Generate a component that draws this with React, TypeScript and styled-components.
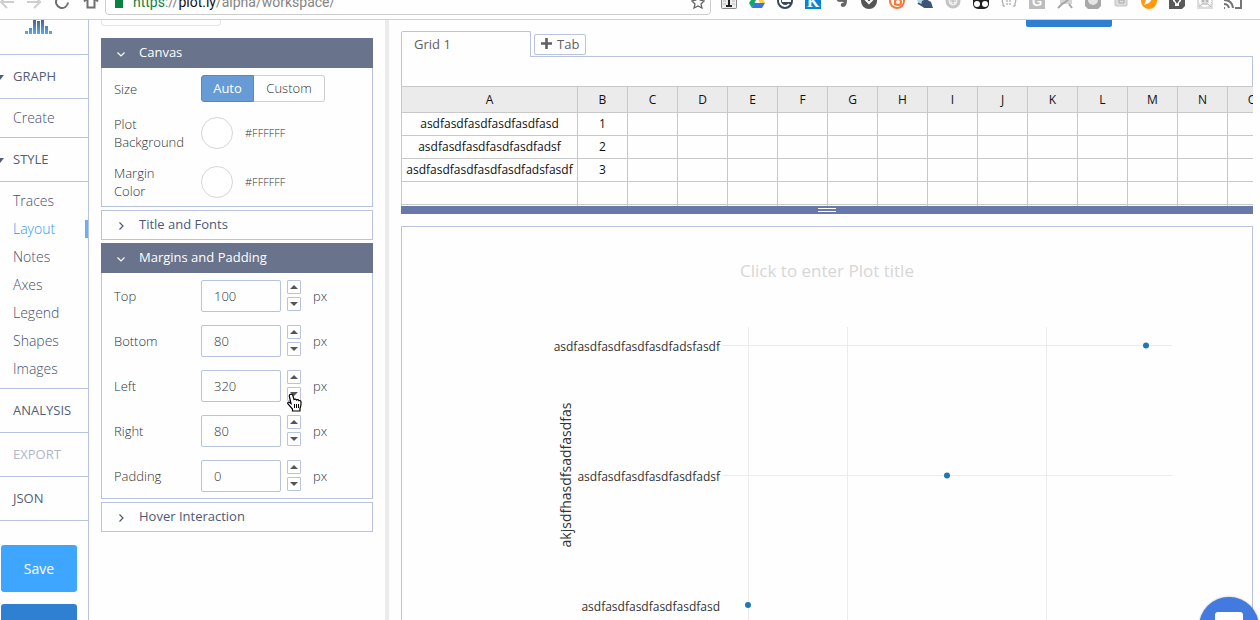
import React, { useState } from "react";
import styled, { createGlobalStyle } from "styled-components";

const line = "#b9c3de";
const slate = "#69738c";

const GlobalStyle = createGlobalStyle`
  * { box-sizing: border-box; }
  html, body { margin: 0; background: #fefefe; }
  body, button, input, table { font-family: "Open Sans", "Noto Sans", sans-serif; }
  button, input { margin: 0; padding: 0; }
`;

const Page = styled.div`
  display: flex;
  flex-direction: column;
  height: 100vh;
  overflow: hidden;
  background: #fefefe;
`;

/* Browser bar */
const BrowserBar = styled.header`
  display: flex;
  align-items: flex-end;
  flex: none;
  height: 20px;
  border-bottom: 1px solid #cfcfcf;
`;
const NavIcons = styled.div`
  display: flex;
  flex: none;
  width: 105px;
  padding-bottom: 10px;
`;
const Address = styled.div`
  display: flex;
  align-items: center;
  flex: 1;
  height: 30px;
  margin-bottom: 4px;
  padding: 4px 5px 0 9px;
  border: 1px solid #cdcdcd;
  border-radius: 4px;
`;
const Lock = styled.span`
  width: 8px;
  height: 12px;
  margin-right: 10px;
  background: #0c8043;
`;
const Url = styled.span`
  flex: 1;
  font: 14px/20px Roboto, "Liberation Sans", sans-serif;
  color: #858585;
`;
const UrlPart = styled.span<{ $color: string }>`
  color: ${(p) => p.$color};
`;
const Extensions = styled.div`
  display: flex;
  flex: none;
  width: 549px;
  padding: 0 0 10px 4px;
`;
const ExtSlot = styled.svg`
  flex: none;
  width: 28px;
  height: 16px;
  overflow: visible;
  font-family: "Liberation Sans", sans-serif;
  font-weight: bold;
`;

/* Workspace */
const Workspace = styled.div`
  display: flex;
  flex: 1;
  min-height: 0;
  overflow: hidden;
`;
const Sidebar = styled.nav`
  flex: none;
  width: 89px;
  border-right: 1px solid ${line};
  overflow: hidden;
`;
const Logo = styled.div`
  height: 35px;
  padding-left: 25px;
  border-bottom: 1px solid ${line};
  svg { display: block; }
`;
const Section = styled.button<{ $muted?: boolean; $open?: boolean }>`
  position: relative;
  display: block;
  width: 100%;
  height: 44px;
  padding: 0 0 2px 13px;
  border: 0;
  border-bottom: 1px solid ${line};
  background: none;
  text-align: left;
  font-size: 13px;
  line-height: 20px;
  color: ${(p) => (p.$muted ? "#b0b7c9" : "#535d78")};
  &::before {
    content: "";
    display: ${(p) => (p.$open ? "block" : "none")};
    position: absolute;
    left: -4px;
    top: 20px;
    border: 4px solid transparent;
    border-top: 5px solid #535d78;
    border-bottom: 0;
  }
`;
const NavGroup = styled.div<{ $pad: number }>`
  padding: ${(p) => p.$pad}px 0;
  border-bottom: 1px solid ${line};
`;
const NavLink = styled.a<{ $active?: boolean }>`
  display: block;
  padding-left: 13px;
  font-size: 14px;
  font-weight: 300;
  line-height: 28px;
  text-decoration: none;
  color: ${(p) => (p.$active ? "#3399f5" : "#465070")};
  background: ${(p) =>
    p.$active ? "linear-gradient(#6aaffa, #6aaffa) right center / 3px 18px no-repeat" : "none"};
`;
const SideActions = styled.div`
  display: flex;
  flex-direction: column;
  gap: 12px;
  padding: 24px 11px 0 1px;
`;
const SideButton = styled.button<{ $dark?: boolean }>`
  height: 47px;
  border: 0;
  border-radius: 3px;
  font-size: 14px;
  color: #fff;
  background: ${(p) => (p.$dark ? "#2f80d3" : "#3fa6ff")};
`;

const Controls = styled.aside`
  display: flex;
  flex-direction: column;
  gap: 3px;
  flex: none;
  width: 300px;
  padding: 0 12px;
  border-right: 4px solid #ebebeb;
`;
const ScrolledBox = styled.div`
  width: 120px;
  height: 6px;
  margin-bottom: 9px;
  border: 1px solid #e4e4e4;
  border-top: 0;
  border-radius: 0 0 4px 4px;
`;
const Fold = styled.section`
  flex: none;
`;
const FoldHead = styled.button<{ $open?: boolean }>`
  display: flex;
  align-items: center;
  width: 100%;
  height: 30px;
  padding: 0 0 2px 14px;
  border: 1px solid ${(p) => (p.$open ? slate : line)};
  background: ${(p) => (p.$open ? slate : "#fefefe")};
  color: ${(p) => (p.$open ? "#fff" : "#4f5975")};
  font-size: 13px;
  line-height: 18px;
  font-weight: 500;
  svg { margin: 3px 13px 0 0; }
`;
const FoldBody = styled.div`
  display: flex;
  flex-direction: column;
  gap: 13px;
  padding: 7px 12px 6px;
  border: 1px solid ${line};
  border-top: 0;
`;
const Row = styled.div`
  display: flex;
  align-items: center;
`;
const labelText = `
  flex: none;
  width: 87px;
  padding-right: 12px;
  font-size: 13px;
  font-weight: 300;
  line-height: 18px;
  color: #333;
`;
const Label = styled.label`${labelText}`;
const Caption = styled.span`${labelText}`;
const Toggle = styled.button<{ $on?: boolean }>`
  width: ${(p) => (p.$on ? 53 : 71)}px;
  height: 27px;
  padding-bottom: 1px;
  border: 1px solid ${(p) => (p.$on ? "#5f86b8" : "#cfcfcf")};
  border-left-width: ${(p) => (p.$on ? 1 : 0)}px;
  border-radius: ${(p) => (p.$on ? "3px 0 0 3px" : "0 3px 3px 0")};
  background: ${(p) => (p.$on ? "#669bd6" : "#fefefe")};
  color: ${(p) => (p.$on ? "#fff" : "#333")};
  font-size: 13px;
  font-weight: ${(p) => (p.$on ? 400 : 300)};
`;
const Swatch = styled.button`
  width: 32px;
  height: 32px;
  margin-right: 12px;
  border: 1px solid #d6d6d6;
  border-radius: 50%;
  background: #fff;
`;
const Hex = styled.span`
  font-size: 11px;
  font-weight: 300;
  line-height: 18px;
  color: #333;
`;
const NumberBox = styled.input`
  width: 80px;
  height: 32px;
  padding: 0 12px;
  border: 1px solid ${line};
  border-radius: 2px;
  background: #fefefe;
  font-size: 13px;
  font-weight: 300;
  color: #333;
  outline: 0;
`;
const Spinner = styled.div`
  position: relative;
  display: flex;
  flex-direction: column;
  gap: 3px;
  margin: 0 12px 1px 6px;
`;
const Step = styled.button`
  display: flex;
  align-items: center;
  justify-content: center;
  width: 14px;
  height: 14px;
  border: 1px solid ${line};
  border-radius: 1px;
  background: #fefefe;
`;
const Hand = styled.svg`
  position: absolute;
  left: 0;
  top: 23px;
  z-index: 2;
`;
const Unit = styled.span`
  font-size: 13px;
  font-weight: 300;
  line-height: 18px;
  color: #333;
`;

const Main = styled.main`
  display: flex;
  flex-direction: column;
  flex: 1;
  min-width: 0;
  padding: 0 7px 0 12px;
`;
const TopActions = styled.div`
  display: flex;
  align-items: flex-end;
  justify-content: flex-end;
  flex: none;
  height: 11px;
  padding: 0 141px 4px 0;
`;
const TopButton = styled.button`
  flex: none;
  width: 86px;
  height: 32px;
  border: 0;
  border-radius: 2px;
  background: #2f80d3;
`;
const Tabs = styled.div`
  display: flex;
  flex: none;
  height: 26px;
`;
const Tab = styled.button`
  width: 130px;
  padding: 0 0 2px 12px;
  border: 1px solid ${line};
  border-bottom: 0;
  border-radius: 2px 2px 0 0;
  background: #fefefe;
  text-align: left;
  font-size: 13px;
  color: #5f5f5f;
`;
const TabRest = styled.div`
  flex: 1;
  padding: 3px 0 0 3px;
  border-bottom: 1px solid ${line};
`;
const AddTab = styled.button`
  display: flex;
  align-items: center;
  gap: 5px;
  width: 52px;
  height: 21px;
  padding: 0 0 2px 6px;
  border: 1px solid ${line};
  border-radius: 2px;
  background: #fefefe;
  font-size: 13px;
  color: #5f5f5f;
`;
const SheetBar = styled.div`
  flex: none;
  height: 29px;
  border: solid ${line};
  border-width: 0 1px;
`;
const Sheet = styled.div`
  flex: none;
  height: 120px;
  overflow: hidden;
`;
const Grid = styled.table`
  width: 1427px;
  table-layout: fixed;
  border-spacing: 0;
  border: solid #c8c8c8;
  border-width: 1px 0 0 1px;
  font-size: 12px;
  line-height: 18px;
  color: #111;
  th, td {
    height: 23px;
    padding: 0;
    border: solid #c8c8c8;
    border-width: 0 1px 1px 0;
    text-align: center;
    font-weight: 400;
  }
  th { width: 50px; height: 26px; background: #ebebeb; }
  th:first-child { width: 176px; }
`;
const Splitter = styled.div`
  display: flex;
  flex-direction: column;
  align-items: center;
  gap: 2px;
  flex: none;
  height: 8px;
  padding-top: 2px;
  background: #6878a8;
`;
const Grip = styled.span`
  width: 18px;
  height: 1px;
  background: #fff;
`;
const Plot = styled.div`
  display: flex;
  justify-content: center;
  flex: 1;
  min-height: 0;
  margin-top: 12px;
  border: 1px solid ${line};
  border-bottom: 0;
  overflow: hidden;
  svg { flex: none; font-family: "Open Sans", "Noto Sans", sans-serif; }
`;
const ChatButton = styled.button`
  position: fixed;
  right: 1px;
  bottom: -37px;
  width: 60px;
  height: 60px;
  border: 0;
  border-radius: 50%;
  background: #427ae0;
  box-shadow: 0 0 2px rgba(0, 0, 0, 0.4);
  svg { display: block; margin: 0 auto; }
`;

const extensions: React.ReactNode[] = [
  <><rect x="6.500" y=".500" width="15" height="15" rx="1" fill="#eee" stroke="#888" /><path d="M14 1v12M11 13h6" stroke="#222" strokeWidth="2" /><path d="M8 8h3M8 11h3M17 8h3M17 11h3" stroke="#bbb" /></>,
  <><path d="M12 1h5l5 9h-5z" fill="#ffcf48" /><path d="M12 1l2 4-5 10-3-5z" fill="#11a861" /><path d="M11 10h11l-3 5H9z" fill="#3777e3" /></>,
  <><circle cx="14" cy="8" r="8" fill="#36465d" /><path d="M18 11a5 5 0 1 1 1-3H11" fill="none" stroke="#fff" strokeWidth="2" /></>,
  <><path d="M6 0h16v16H6z" fill="#0a84d0" /><text x="8" y="14" fontSize="16" fill="#fff" fontFamily="Liberation Serif">K</text></>,
  <path d="M9 4l4-4h4q3 0 3 7 0 7-4 7-3 0-2-3 1-2 3-1-1-2-4-1-4 0-4-5z" fill="#666" />,
  <><path d="M6 1h16v7a8 8 0 0 1-16 0z" fill="#555" /><path d="M10 6l4 4 4-4" fill="none" stroke="#fff" strokeWidth="2" /></>,
  <><circle cx="14" cy="8" r="7" fill="#fff" stroke="#f47b3d" strokeWidth="2" /><path d="M12 1v11" stroke="#f47b3d" strokeWidth="2" /><circle cx="15" cy="9" r="3" fill="none" stroke="#f47b3d" strokeWidth="2" /></>,
  <><circle cx="10" cy="6" r="4" fill="#b7d6ee" /><path d="M11 8l4-2 5 3 2 6h-9l-3-3z" fill="#3e5575" /><path d="M7 10l5 3" stroke="#3e5575" strokeWidth="2" /></>,
  <><circle cx="14" cy="8" r="6" fill="#eee" stroke="#c4c4c4" strokeWidth="3" /><path d="M14 5v6M11 8h6" stroke="#bbb" /></>,
  <><rect x="6" y="0" width="16" height="16" rx="5" fill="#222" /><circle cx="10" cy="11" r="3" fill="#fff" /><circle cx="18" cy="11" r="3" fill="#fff" /></>,
  <><path d="M10 1H8v5L7 8l1 2v3h2M18 1h2v5l1 2-1 2v3h-2" fill="none" stroke="#999" /><path d="M11 8h6M11 11h6" stroke="#999" strokeDasharray="2 1" /></>,
  <><path d="M6 0h16v16H6z" fill="#bdbdbd" /><text x="9" y="13" fontSize="13" fill="#fff">G</text></>,
  <><path d="M9 2h12v9H9z" fill="#d5d5d5" /><path d="M7 15l4-4 2-1 4-3M18 11l3 4" fill="none" stroke="#a6a6a6" strokeWidth="2" /></>,
  <><path d="M6 0h16v13l-3 3H9l-3-3z" fill="#a8a8a8" /><circle cx="14" cy="7" r="5" fill="#e5e5e5" /></>,
  <><rect x="8" y="0" width="12" height="13" rx="1" fill="#ddd" stroke="#c2c2c2" /><path d="M12 4h5v6h-5zM12 7h5" fill="none" stroke="#aaa" /></>,
  <><circle cx="14" cy="8" r="8" fill="#ff9a0e" /><path d="M9 12l2-5 5-5 3 2-5 6z" fill="#fff" /></>,
  <><path d="M6 0h16v13l-3 3H6z" fill="#595959" /><path d="M10 5h8v3l-2 2v3h-4v-3l-2-2z" fill="#fff" /><path d="M12 6l2 3 2-3" fill="none" stroke="#595959" strokeWidth="2" /></>,
  <><path d="M6 0h16v16H6z" fill="#ddd" /><circle cx="14" cy="8" r="5" fill="none" stroke="#fff" strokeWidth="2" /><path d="M8 14l3-3h6l3 3" fill="none" stroke="#bbb" /><circle cx="12" cy="8" r="1" fill="#aaa" /><circle cx="16" cy="8" r="1" fill="#aaa" /></>,
  <path d="M6 3V1h16v14h-6M5 15h1M5 11q4 0 5 4M5 7q8 0 9 8" fill="none" stroke="#757575" strokeWidth="2" />,
  <path d="M13 3h3M13 8h3M13 13h3" stroke="#777" strokeWidth="3" />,
];

const columns = "ABCDEFGHIJKLMNOPQRSTUVWXYZ".split("");
const cells = [
  ["asdfasdfasdfasdfasdfasd", "1"],
  ["asdfasdfasdfasdfasdfadsf", "2"],
  ["asdfasdfasdfasdfasdfadsfasdf", "3"],
  [],
  [],
];
const styleLinks = ["Traces", "Layout", "Notes", "Axes", "Legend", "Shapes", "Images"];
const ticks = [
  { text: "asdfasdfasdfasdfasdfadsfasdf", y: 124 },
  { text: "asdfasdfasdfasdfasdfadsf", y: 254 },
  { text: "asdfasdfasdfasdfasdfasd", y: 384 },
];

const Chevron = ({ open }: { open?: boolean }) => (
  <svg width="10" height="10" viewBox="0 0 10 10" fill="none" stroke="currentColor">
    <path d={open ? "M1.500 3.500L5 7l3.500-3.500" : "M3.500 1.500L7 5 3.500 8.500"} strokeWidth="1.200" />
  </svg>
);

const HandCursor = () => (
  <Hand width="16" height="19" viewBox="0 0 16 19">
    <path
      d="M3 1.500C4.500.500 5.500 1.500 6 3l1 3.500c1-.8 2-.5 2.500.5 1-.8 2-.4 2.500.7 1.200-.6 2 .2 2 1.300.3 3-.5 4.500-1 6.500v2.500H5.500V16L1 11c-.8-1.500.8-2.500 2-1.300l1 .8L2.500 4C2.200 3 2.200 2 3 1.500z"
      fill="#fff" stroke="#000" strokeWidth="1.200"
    />
    <path d="M7.500 11v4M9.500 11v4M11.500 11v4" stroke="#000" />
  </Hand>
);

function MarginRow({ name, start, hovered }: { name: string; start: number; hovered?: boolean }) {
  const [value, setValue] = useState(start);
  const id = `margin-${name.toLowerCase()}`;
  return (
    <Row>
      <Label htmlFor={id}>{name}</Label>
      <NumberBox id={id} value={value} onChange={(e) => setValue(Number(e.target.value) || 0)} />
      <Spinner>
        <Step aria-label={`Increase ${name}`} onClick={() => setValue(value + 1)}>
          <svg width="8" height="4"><path d="M0 4l4-4 4 4z" fill="#555" /></svg>
        </Step>
        <Step aria-label={`Decrease ${name}`} onClick={() => setValue(value - 1)}>
          <svg width="8" height="4"><path d="M0 0l4 4 4-4z" fill="#555" /></svg>
        </Step>
        {hovered && <HandCursor />}
      </Spinner>
      <Unit>px</Unit>
    </Row>
  );
}

export default function App() {
  return (
    <Page>
      <GlobalStyle />
      <BrowserBar>
        <NavIcons>
          <svg width="105" height="18" viewBox="0 0 105 18" fill="none" strokeWidth="2">
            <path d="M14 11H1M7 5L1 11l6 6M27 11h14M34 5l6 6-6 6" stroke="#cfcfcf" />
            <path d="M68 11.500a6 6 0 1 1-2-5M87.500 9v7.500h7V9M84 10.500L91 4l7 6.500" stroke="#6f6f6f" />
          </svg>
        </NavIcons>
        <Address>
          <Lock />
          <Url>
            <UrlPart $color="#0c8043">https</UrlPart>://<UrlPart $color="#111">plot.ly</UrlPart>/alpha/workspace/
          </Url>
          <svg width="14" height="14" viewBox="0 0 14 14">
            <path d="M7 1l2 4 4 1-3 3 1 4-4-2-4 2 1-4-3-3 4-1z" fill="none" stroke="#666" strokeWidth="1.300" />
          </svg>
        </Address>
        <Extensions>
          {extensions.map((icon, i) => (
            <ExtSlot key={i} viewBox="0 0 28 16">{icon}</ExtSlot>
          ))}
        </Extensions>
      </BrowserBar>

      <Workspace>
        <Sidebar>
          <Logo>
            <svg width="28" height="14" viewBox="0 0 28 14">
              <defs>
                <linearGradient id="bars" x1="0" y1="0" x2="0" y2="14" gradientUnits="userSpaceOnUse">
                  <stop offset="0" stopColor="#47628f" />
                  <stop offset="1" stopColor="#5ba8f5" />
                </linearGradient>
              </defs>
              <path fill="url(#bars)" d="M0 11h3v3H0zM4 8h3v6H4zM8 0h3v14H8zM12 1h3v13h-3zM16 0h3v14h-3zM20 6h3v8h-3zM24 11h3v3h-3z" />
            </svg>
          </Logo>
          <Section $open>GRAPH</Section>
          <NavGroup $pad={5}>
            <NavLink href="#create">Create</NavLink>
          </NavGroup>
          <Section $open>STYLE</Section>
          <NavGroup $pad={5}>
            {styleLinks.map((name) => (
              <NavLink key={name} href={`#${name.toLowerCase()}`} $active={name === "Layout"}>{name}</NavLink>
            ))}
          </NavGroup>
          <Section>ANALYSIS</Section>
          <Section $muted>EXPORT</Section>
          <Section>JSON</Section>
          <SideActions>
            <SideButton>Save</SideButton>
            <SideButton $dark aria-label="Share" />
          </SideActions>
        </Sidebar>

        <Controls>
          <ScrolledBox />
          <Fold>
            <FoldHead $open><Chevron open />Canvas</FoldHead>
            <FoldBody>
              <Row>
                <Caption>Size</Caption>
                <Toggle $on>Auto</Toggle>
                <Toggle>Custom</Toggle>
              </Row>
              <Row>
                <Label htmlFor="plot-background">Plot Background</Label>
                <Swatch id="plot-background" />
                <Hex>#FFFFFF</Hex>
              </Row>
              <Row>
                <Label htmlFor="margin-color">Margin<br />Color</Label>
                <Swatch id="margin-color" />
                <Hex>#FFFFFF</Hex>
              </Row>
            </FoldBody>
          </Fold>
          <Fold>
            <FoldHead><Chevron />Title and Fonts</FoldHead>
          </Fold>
          <Fold>
            <FoldHead $open><Chevron open />Margins and Padding</FoldHead>
            <FoldBody>
              <MarginRow name="Top" start={100} />
              <MarginRow name="Bottom" start={80} />
              <MarginRow name="Left" start={320} hovered />
              <MarginRow name="Right" start={80} />
              <MarginRow name="Padding" start={0} />
            </FoldBody>
          </Fold>
          <Fold>
            <FoldHead><Chevron />Hover Interaction</FoldHead>
          </Fold>
        </Controls>

        <Main>
          <TopActions><TopButton aria-label="Upgrade" /></TopActions>
          <Tabs>
            <Tab>Grid 1</Tab>
            <TabRest>
              <AddTab>
                <svg width="11" height="11"><path d="M5.500 0v11M0 5.500h11" stroke="#5f5f5f" strokeWidth="2.600" /></svg>
                Tab
              </AddTab>
            </TabRest>
          </Tabs>
          <SheetBar />
          <Sheet>
            <Grid>
              <thead>
                <tr>{columns.map((c) => <th key={c} scope="col">{c}</th>)}</tr>
              </thead>
              <tbody>
                {cells.map((row, r) => (
                  <tr key={r}>{columns.map((c, i) => <td key={c}>{row[i]}</td>)}</tr>
                ))}
              </tbody>
            </Grid>
          </Sheet>
          <Splitter><Grip /><Grip /></Splitter>
          <Plot>
            <svg width="850" height="480" viewBox="0 0 850 480">
              <text x="425" y="50" textAnchor="middle" fontSize="17" fill="#d6d6d6">
                Click to enter Plot title
              </text>
              <path
                d="M346.500 100v380M445.500 100v380M644.500 100v380M320 118.500h450M320 248.500h450"
                fill="none" stroke="#ebebeb"
              />
              {ticks.map((t) => (
                <text key={t.y} x="318" y={t.y} textAnchor="end" fontSize="12" fill="#333">{t.text}</text>
              ))}
              <text transform="translate(169 248) rotate(-90)" textAnchor="middle" fontSize="14" fill="#333">
                akjsdfhasdfsadfasdfas
              </text>
              <g fill="#1f77b4">
                <circle cx="744" cy="118.500" r="3" />
                <circle cx="545" cy="248.500" r="3" />
                <circle cx="346" cy="378" r="3" />
              </g>
            </svg>
          </Plot>
        </Main>
      </Workspace>

      <ChatButton aria-label="Open chat">
        <svg width="28" height="30" viewBox="0 0 28 30">
          <path d="M3 0h22q3 0 3 3v27l-6-4H3q-3 0-3-3V3q0-3 3-3z" fill="#fff" />
        </svg>
      </ChatButton>
    </Page>
  );
}
